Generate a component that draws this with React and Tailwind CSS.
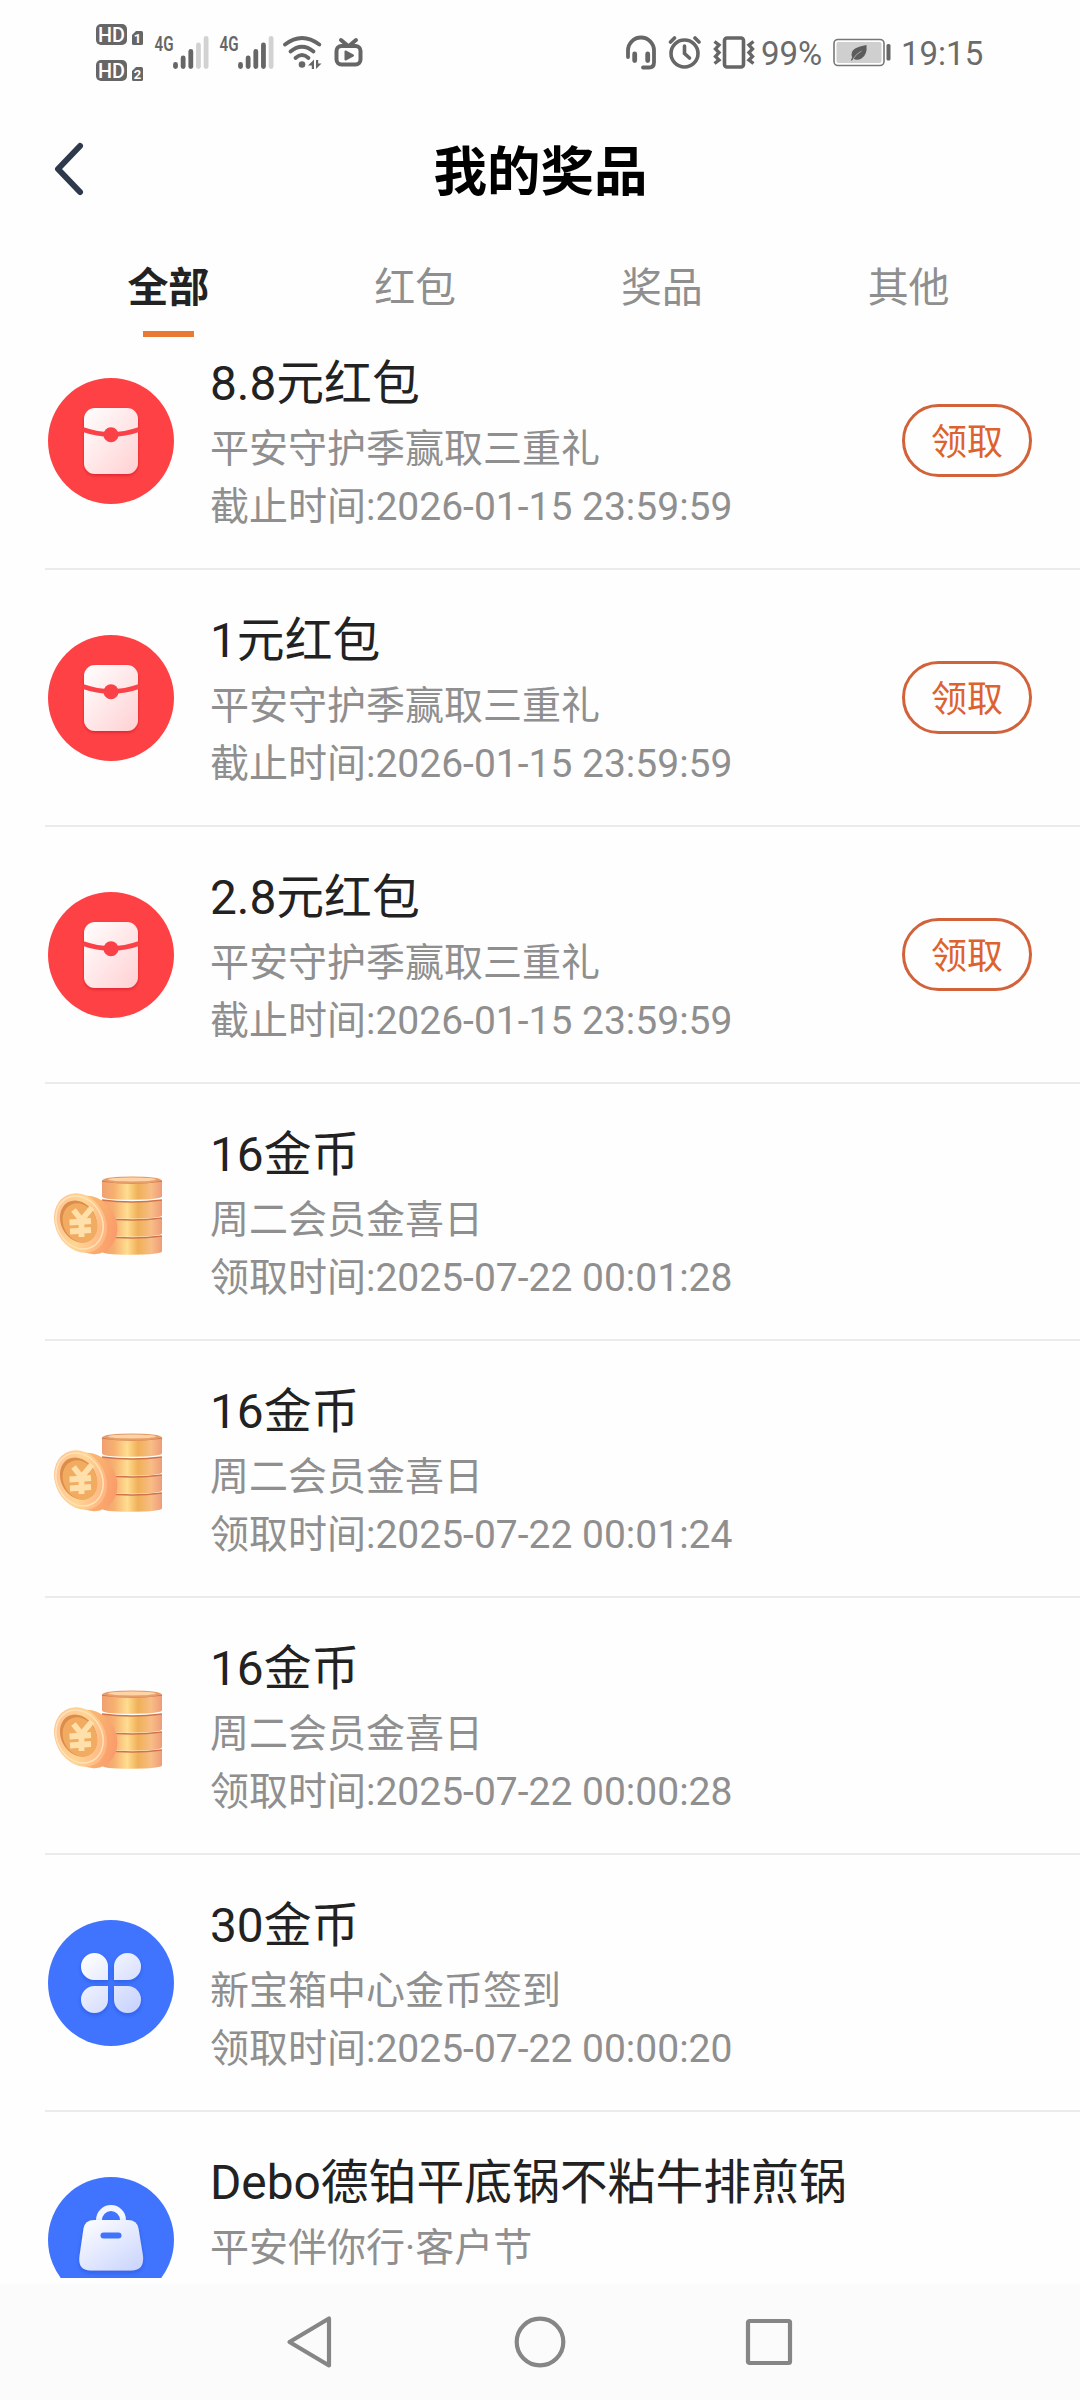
const tabs = ['全部', '红包', '奖品', '其他']

const prizes = [
  { icon: 'packet', title: '8.8元红包', desc: '平安守护季赢取三重礼', time: '截止时间:2026-01-15 23:59:59', claimable: true },
  { icon: 'packet', title: '1元红包', desc: '平安守护季赢取三重礼', time: '截止时间:2026-01-15 23:59:59', claimable: true },
  { icon: 'packet', title: '2.8元红包', desc: '平安守护季赢取三重礼', time: '截止时间:2026-01-15 23:59:59', claimable: true },
  { icon: 'coins', title: '16金币', desc: '周二会员金喜日', time: '领取时间:2025-07-22 00:01:28' },
  { icon: 'coins', title: '16金币', desc: '周二会员金喜日', time: '领取时间:2025-07-22 00:01:24' },
  { icon: 'coins', title: '16金币', desc: '周二会员金喜日', time: '领取时间:2025-07-22 00:00:28' },
  { icon: 'clover', title: '30金币', desc: '新宝箱中心金币签到', time: '领取时间:2025-07-22 00:00:20' },
  { icon: 'bag', title: 'Debo德铂平底锅不粘牛排煎锅', desc: '平安伴你行·客户节', time: '' },
]

function HdIcon() {
  return (
    <svg width="49" height="60" viewBox="95 23 49 60" className="mt-[23px] font-['Roboto']" fill="#666">
      <rect x="96" y="24" width="31" height="21" rx="5" />
      <text x="111.5" y="41.5" fontSize="20" fontWeight="500" fill="#fff" textAnchor="middle" textLength="27" lengthAdjust="spacingAndGlyphs">HD</text>
      <path d="M136 31h5.500q1.500 0 1.500 1.500v11q0 1.500-1.500 1.500h-8q-1.500 0-1.500-1.500v-8.500z" />
      <text x="137.500" y="43.300" fontSize="13" fontWeight="700" fill="#fff" textAnchor="middle">1</text>
      <rect x="96" y="60" width="31" height="21" rx="5" />
      <text x="111.500" y="77.500" fontSize="20" fontWeight="500" fill="#fff" textAnchor="middle" textLength="27" lengthAdjust="spacingAndGlyphs">HD</text>
      <path d="M136 67h5.500q1.500 0 1.500 1.500v11q0 1.500-1.500 1.500h-8q-1.500 0-1.500-1.500v-8.500z" />
      <text x="137.500" y="79.300" fontSize="13" fontWeight="700" fill="#fff" textAnchor="middle">2</text>
    </svg>
  )
}

function SignalIcon({ level, className }) {
  const tops = [64.5, 58, 51.5, 45, 38.5]
  return (
    <svg width="55" height="42" viewBox="154 28 55 42" className={`overflow-visible font-['Roboto'] ${className}`}>
      <text x="154.500" y="50.800" fontSize="20.500" fontWeight="600" fill="#666" textLength="19" lengthAdjust="spacingAndGlyphs">4G</text>
      {tops.map((y, i) => (
        <path
          key={y}
          d={`M${175.5 + i * 7.65} ${y}V66.500`}
          stroke={i < level ? '#666' : '#d2d2d2'}
          strokeWidth="4.800"
          strokeLinecap="round"
        />
      ))}
    </svg>
  )
}

function WifiIcon() {
  return (
    <svg width="40" height="34" viewBox="282 36 40 34" className="ml-[8px] mt-[36px]" fill="none" stroke="#666" strokeWidth="3.800" strokeLinecap="round">
      <path d="M285 44.500Q302 31.500 319.300 44.500" />
      <path d="M290.500 51.500Q302 42 313.500 51.500" />
      <path d="M295.500 58Q302 52 308.500 58" />
      <circle cx="302" cy="64.500" r="3.300" fill="#666" stroke="none" />
      <path d="M308 65.500l6-6v9.500h-2.200v-3.500zM316 60v9l5.500-5.500h-3.300v-3.500z" fill="#666" stroke="none" />
    </svg>
  )
}

function TvIcon() {
  return (
    <svg width="29" height="31" viewBox="334 37 29 31" className="ml-[12px] mt-[37px]" fill="none" stroke="#666" strokeWidth="4" strokeLinecap="round">
      <rect x="336.500" y="46" width="24" height="18.500" rx="5" />
      <path d="M341 40l6.500 5.500M356 40l-6.500 5.500" />
      <path d="M345.500 51.500v8l7.500-4z" fill="#666" strokeWidth="2" strokeLinejoin="round" />
    </svg>
  )
}

function HeadsetIcon() {
  return (
    <svg width="32" height="35" viewBox="624 35 32 35" className="mt-[35px]" fill="none" stroke="#666" strokeWidth="3.800" strokeLinecap="round">
      <path d="M627 57v-6.500a13 13 0 0 1 26 0v12q0 5-5 5h-6" />
      <path d="M633.700 54v6.500M646.700 54v6.500" strokeWidth="4.800" />
    </svg>
  )
}

function AlarmIcon() {
  return (
    <svg width="34" height="36" viewBox="667 34 34 36" className="ml-[11px] mt-[34px]" fill="none" stroke="#666" strokeWidth="3.600" strokeLinecap="round">
      <circle cx="683.500" cy="53.500" r="13.500" />
      <path d="M683.500 46v7.500l5 4.500" />
      <path d="M669.500 42l4-4M698 42l-4-4" />
    </svg>
  )
}

function VibrateIcon() {
  return (
    <svg width="44" height="36" viewBox="711 34 44 36" className="ml-[10px] mt-[34px]" fill="none" stroke="#666" strokeWidth="3.600">
      <rect x="723.500" y="38" width="19" height="29" rx="2.500" />
      <path d="M713.500 41.500l4.500 3.500-3.500 4 3.500 3.500-3.500 4 3.500 3.500-4.500 3.500" strokeWidth="3.400" />
      <path d="M752.500 41.500l-4.500 3.500 3.500 4-3.500 3.500 3.500 4-3.500 3.500 4.500 3.500" strokeWidth="3.400" />
    </svg>
  )
}

function BatteryIcon() {
  return (
    <svg width="59" height="30" viewBox="832 38 59 30" className="ml-[9px] mt-[38px]">
      <rect x="833" y="39.500" width="50" height="26" rx="4" fill="#fff" stroke="#777" strokeWidth="1.600" />
      <rect x="835.500" y="42" width="45" height="21" rx="2" fill="#cfcfcf" />
      <rect x="885.500" y="44" width="4" height="16.500" rx="1.500" fill="#666" />
      <path d="M865.500 45q1 10-5 13.500-4.500 2.500-8 .3l-1.800 2-.8-.8 1.300-2.500q-2.200-6 3-9 4-2.300 11.300-3.500z" fill="#5c5c5c" />
      <path d="M852 59q3-5 8.500-8" stroke="#bbb" strokeWidth=".8" fill="none" />
    </svg>
  )
}

function StatusBar() {
  return (
    <div className="flex h-[110px] items-start pl-[95px] pr-[95px]">
      <HdIcon />
      <SignalIcon level={3} className="ml-[10px] mt-[28px]" />
      <SignalIcon level={4} className="ml-[10px] mt-[28px]" />
      <WifiIcon />
      <TvIcon />
      <div className="ml-auto flex items-start text-[33px] leading-[40px] text-[#6b6b6b]">
        <HeadsetIcon />
        <AlarmIcon />
        <VibrateIcon />
        <span className="ml-[5px] mt-[34px] w-[63px] whitespace-nowrap">99%</span>
        <BatteryIcon />
        <span className="ml-[9px] mt-[34px] w-[84px] whitespace-nowrap">19:15</span>
      </div>
    </div>
  )
}

function PacketIcon() {
  return (
    <svg width="126" height="126" viewBox="0 0 126 126">
      <defs>
        <linearGradient id="packetFill" x1="0" y1="0" x2="1" y2="1">
          <stop offset="0" stopColor="#fff" />
          <stop offset="1" stopColor="#ffd0d2" />
        </linearGradient>
        <filter id="packetShadow" x="-20%" y="-20%" width="140%" height="140%">
          <feDropShadow dx="0" dy="1.500" stdDeviation="1.500" floodColor="#b01018" floodOpacity=".45" />
        </filter>
      </defs>
      <circle cx="63" cy="63" r="63" fill="#fe4145" />
      <rect x="36" y="30" width="54" height="66" rx="11" fill="url(#packetFill)" filter="url(#packetShadow)" />
      <path d="M35 51.500Q49 56.500 63 56.500T91 51.500" stroke="#f94147" strokeWidth="5" fill="none" />
      <circle cx="63" cy="56.800" r="7.500" fill="#f94147" />
    </svg>
  )
}

function CoinsIcon() {
  return (
    <svg width="126" height="126" viewBox="0 0 126 126">
      <defs>
        <linearGradient id="stackFill" gradientUnits="userSpaceOnUse" x1="54" y1="0" x2="114" y2="0">
          <stop offset="0" stopColor="#f0a070" />
          <stop offset=".2" stopColor="#f6b070" />
          <stop offset=".42" stopColor="#ffdd90" />
          <stop offset=".6" stopColor="#efb058" />
          <stop offset=".82" stopColor="#f8bd86" />
          <stop offset="1" stopColor="#ef9c78" />
        </linearGradient>
        <linearGradient id="coinEdge" x1="0" y1="0" x2="1" y2="1">
          <stop offset="0" stopColor="#fcd08f" />
          <stop offset=".5" stopColor="#f9b570" />
          <stop offset="1" stopColor="#fb9068" />
        </linearGradient>
        <linearGradient id="coinFace" x1="0" y1="0" x2="1" y2="1">
          <stop offset="0" stopColor="#ffbd98" />
          <stop offset=".5" stopColor="#ffd593" />
          <stop offset="1" stopColor="#ffa67c" />
        </linearGradient>
      </defs>
      {[87, 69, 51, 32].map((y) => (
        <g key={y}>
          <path d={`M54 ${y}q30 4 60 0v15.500q-1 3-30 3.200t-30-3.200z`} fill="url(#stackFill)" />
          <path d={`M54 ${y}q30 4 60 0`} stroke="#cf744a" strokeWidth="1.500" fill="none" />
        </g>
      ))}
      <ellipse cx="84" cy="31" rx="29.500" ry="3.400" fill="#e79c6b" />
      <ellipse cx="84" cy="30.500" rx="24" ry="2" fill="#ffd3a4" />
      <ellipse cx="42.500" cy="76" rx="26" ry="30" fill="url(#coinEdge)" transform="rotate(-28 42.500 76)" />
      <ellipse cx="32.500" cy="74" rx="25" ry="31" fill="url(#coinFace)" transform="rotate(-28 32.500 74)" />
      <ellipse cx="31.500" cy="73.500" rx="22.500" ry="27.500" fill="none" stroke="#ffe3b4" strokeWidth="1.500" transform="rotate(-28 31.500 73.500)" />
      <ellipse cx="30.500" cy="72.500" rx="17.500" ry="22" fill="#dd8d4b" transform="rotate(-28 30.500 72.500)" />
      <ellipse cx="32" cy="74" rx="16.500" ry="20.500" fill="#f2ac62" transform="rotate(-28 32 74)" />
      <path d="M25.500 61l8 10 10.500-12.500M33.500 70.500v17.500M21.500 73.500l21.500-1.500M22 82.500l21-1.500" stroke="#ffe0aa" strokeWidth="5.800" fill="none" />
    </svg>
  )
}

function CloverIcon() {
  return (
    <svg width="126" height="126" viewBox="0 0 126 126">
      <defs>
        <linearGradient id="cloverFill" gradientUnits="userSpaceOnUse" x1="35" y1="35" x2="85" y2="93">
          <stop offset="0" stopColor="#fff" />
          <stop offset="1" stopColor="#c9d3fd" />
        </linearGradient>
        <filter id="cloverShadow" x="-20%" y="-20%" width="140%" height="140%">
          <feDropShadow dx="0" dy="2" stdDeviation="2" floodColor="#1f46c8" floodOpacity=".45" />
        </filter>
      </defs>
      <circle cx="63" cy="63" r="63" fill="#4174fe" />
      <g fill="url(#cloverFill)" filter="url(#cloverShadow)">
        <path d="M60 60H46.500A13.500 13.500 0 1 1 60 46.500z" />
        <path d="M66 60V46.500A13.500 13.500 0 1 1 79.500 60z" />
        <path d="M60 66V79.500A13.500 13.500 0 1 1 46.500 66z" />
        <path d="M66 66H79.500A13.500 13.500 0 1 1 66 79.500z" />
      </g>
    </svg>
  )
}

function BagIcon() {
  return (
    <svg width="126" height="126" viewBox="0 0 126 126">
      <defs>
        <linearGradient id="bagFill" x1="0" y1="0" x2=".8" y2="1">
          <stop offset="0" stopColor="#fff" />
          <stop offset="1" stopColor="#cdd7fd" />
        </linearGradient>
        <filter id="bagShadow" x="-20%" y="-20%" width="140%" height="140%">
          <feDropShadow dx="0" dy="2" stdDeviation="2" floodColor="#1f46c8" floodOpacity=".45" />
        </filter>
      </defs>
      <circle cx="63" cy="63" r="63" fill="#4174fe" />
      <path d="M51 45v-2a12 12 0 0 1 24 0v2" stroke="#f4f6ff" strokeWidth="6" fill="none" />
      <path d="M46 43h34q9 0 10.500 8.500L95 79q1.500 14.500-12 14.500H43Q29.500 93.500 31.500 79L35.500 51.500Q37 43 46 43z" fill="url(#bagFill)" filter="url(#bagShadow)" />
      <rect x="52.500" y="55.500" width="21" height="6" rx="3" fill="#4174fe" />
    </svg>
  )
}

const icons = { packet: PacketIcon, coins: CoinsIcon, clover: CloverIcon, bag: BagIcon }

function PrizeRow({ prize }) {
  const Icon = icons[prize.icon]
  return (
    <li className="ml-[45px] flex h-[257px] shrink-0 items-start border-b-2 border-[#ebebeb] pl-[3px] pr-12">
      <div className="mt-[65px] shrink-0">
        <Icon />
      </div>
      <div className="ml-9 flex-1 whitespace-nowrap text-[39px] text-[#8f8f8f]">
        <h2 className="mt-[39px] text-[47.8px] leading-[64px] text-[#222]">{prize.title}</h2>
        <p className="mt-[4px] leading-[58px]">{prize.desc}</p>
        <p className="leading-[59px]">{prize.time}</p>
      </div>
      {prize.claimable && (
        <button className="mt-[91px] h-[73px] w-[130px] rounded-full border-[3px] border-[#d2623a] pt-[3px] text-[36px] leading-[66px] text-[#dc6230]">
          领取
        </button>
      )}
    </li>
  )
}

function NavBar() {
  return (
    <nav className="flex h-[116px] items-center justify-center gap-[176px] bg-[#fbfbfb]">
      <svg width="54" height="56" viewBox="0 0 54 56" fill="none" stroke="#868686" strokeWidth="4.200" strokeLinejoin="round">
        <path d="M45 4.500v47L5.500 28z" />
      </svg>
      <svg width="52" height="56" viewBox="0 0 52 56" fill="none" stroke="#868686" strokeWidth="4.200">
        <circle cx="26" cy="28" r="23.300" />
      </svg>
      <svg width="54" height="56" viewBox="0 0 54 56" fill="none" stroke="#868686" strokeWidth="4.200">
        <rect x="6" y="7" width="42" height="42" rx="1.500" />
      </svg>
    </nav>
  )
}

export default function App() {
  return (
    <div className="flex h-[2400px] w-[1080px] flex-col overflow-hidden bg-[#fefefe] font-['Roboto','Noto_Sans_CJK_SC',sans-serif]">
      <StatusBar />

      <header className="flex h-[120px] items-center px-[51px]">
        <svg width="34" height="58" viewBox="0 0 34 58" className="mb-[3px]" fill="none" stroke="#2f394c" strokeWidth="6" strokeLinecap="round" strokeLinejoin="round">
          <path d="M29 6L7 29l22 23" />
        </svg>
        <h1 className="mr-[33px] flex-1 pt-[5px] text-center text-[53.5px] font-bold leading-[80px] text-black">我的奖品</h1>
      </header>

      <div className="flex h-[107px] shrink-0 pl-[45px] pr-[48px]">
        {tabs.map((tab, i) => (
          <div key={tab} className="flex flex-1 flex-col items-center">
            <span className={`mt-[28px] text-[41px] leading-[60px] ${i === 0 ? 'font-bold text-[#222]' : 'text-[#8f8f8f]'}`}>{tab}</span>
            {i === 0 && <span className="mt-[13px] h-[6px] w-[51px] bg-[#e87a35]" />}
          </div>
        ))}
      </div>

      <ul className="-mt-px h-[1942px] shrink-0 overflow-hidden">
        <div className="-mt-[23px] flex flex-col">
          {prizes.map((prize, i) => (
            <PrizeRow key={i} prize={prize} />
          ))}
        </div>
      </ul>

      <div className="mt-auto shrink-0">
        <NavBar />
      </div>
    </div>
  )
}
